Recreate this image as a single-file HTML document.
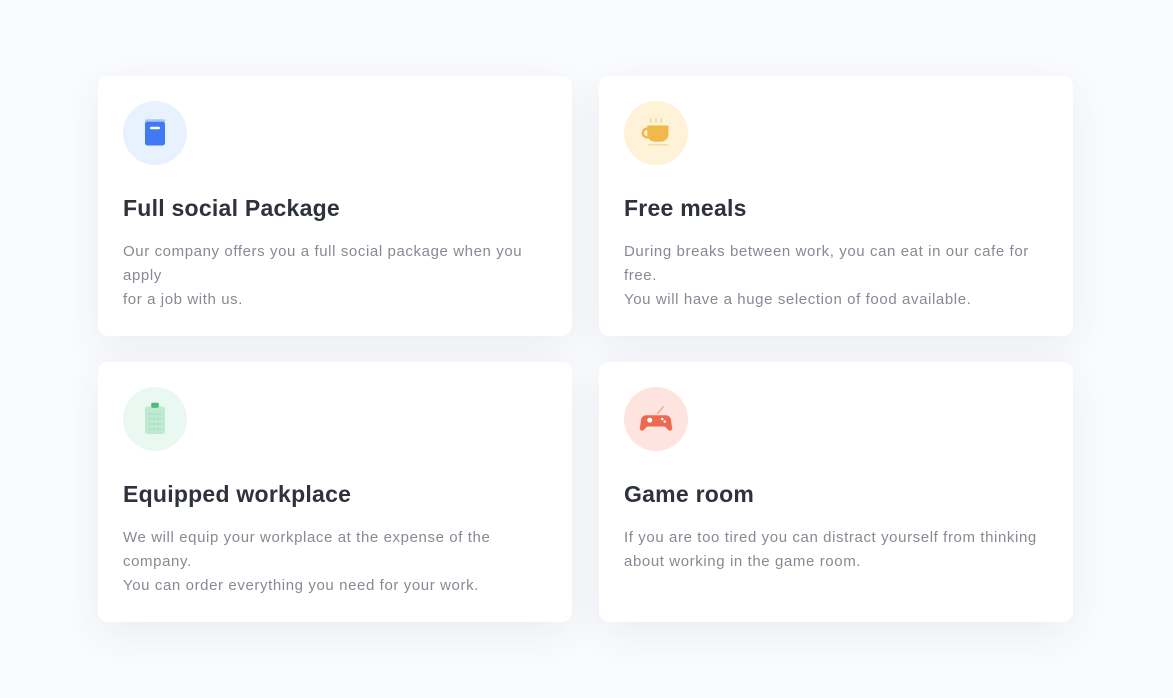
<!DOCTYPE html>
<html><head><style>
body{margin:0;width:1173px;height:698px;background:#fafbfd;font-family:"Liberation Sans",sans-serif;position:relative;overflow:hidden}
.c{position:absolute;width:474px;height:260px;background:#fff;border-radius:10px;box-shadow:0 12px 40px rgba(40,50,80,.07)}
.i{position:absolute;left:25px;top:25px;width:64px;height:64px;border-radius:50%}
.i svg{position:absolute;left:12px;top:12px}
h3{position:absolute;left:25px;top:119px;margin:0;font-size:23px;font-weight:bold;color:#2e323b;letter-spacing:.25px;white-space:nowrap}
p{position:absolute;left:25px;top:164px;margin:0;font-size:15px;line-height:24px;color:#878a93;letter-spacing:.6px;white-space:nowrap}
</style></head><body>
<div class="c" style="left:98px;top:76px">
<div class="i" style="background:#e8f1fe"><svg width="40" height="40" viewBox="0 0 32 32"><rect x="8" y="5" width="16" height="4" rx="1" fill="#a8c4fb"/><rect x="8" y="7" width="16" height="19" rx="2" fill="#4178f4"/><rect x="12" y="11" width="8" height="2" rx="1" fill="#fff"/></svg></div>
<h3>Full social Package</h3>
<p>Our company offers you a full social package when you<br>apply<br>for a job with us.</p></div>
<div class="c" style="left:599px;top:76px">
<div class="i" style="background:#fef3d9"><svg width="40" height="40" viewBox="0 0 32 32"><path d="M12 4v4M16 4v4M20 4v4" stroke="#f2d18c" stroke-width="1"/><path d="M9 10h17v7a6 6 0 0 1-6 6h-5a6 6 0 0 1-6-6z" fill="#f1b94b"/><circle cx="9" cy="16" r="3.5" fill="none" stroke="#f1b94b" stroke-width="2"/><rect x="10" y="25" width="16" height="1" fill="#f4d598"/></svg></div>
<h3>Free meals</h3>
<p>During breaks between work, you can eat in our cafe for<br>free.<br>You will have a huge selection of food available.</p></div>
<div class="c" style="left:98px;top:362px">
<div class="i" style="background:#e9f8f0"><svg width="40" height="40" viewBox="0 0 32 32"><rect x="8" y="6" width="16" height="22" rx="2" fill="#bfe9d1"/><rect x="13" y="3" width="6" height="4" rx="1" fill="#4bbb7a"/><path d="M11 12h10M11 16h10M11 20h10M11 24h10" stroke="#9fdcb9" stroke-dasharray="2 1"/></svg></div>
<h3>Equipped workplace</h3>
<p>We will equip your workplace at the expense of the<br>company.<br>You can order everything you need for your work.</p></div>
<div class="c" style="left:599px;top:362px">
<div class="i" style="background:#fde4df"><svg width="40" height="40" viewBox="0 0 32 32"><path d="M17 12l5-6" stroke="#f19c8c" stroke-width="1"/><path d="M8 13h16a4 4 0 0 1 4 4l1 7a2 2 0 0 1-3 1l-3-3H9l-3 3a2 2 0 0 1-3-1l1-7a4 4 0 0 1 4-4z" fill="#ec6a50"/><circle cx="11" cy="17" r="2" fill="#fff"/><circle cx="21" cy="16" r="1" fill="#fff"/><circle cx="23" cy="18" r="1" fill="#fff"/></svg></div>
<h3>Game room</h3>
<p>If you are too tired you can distract yourself from thinking<br>about working in the game room.</p></div>
</body></html>
